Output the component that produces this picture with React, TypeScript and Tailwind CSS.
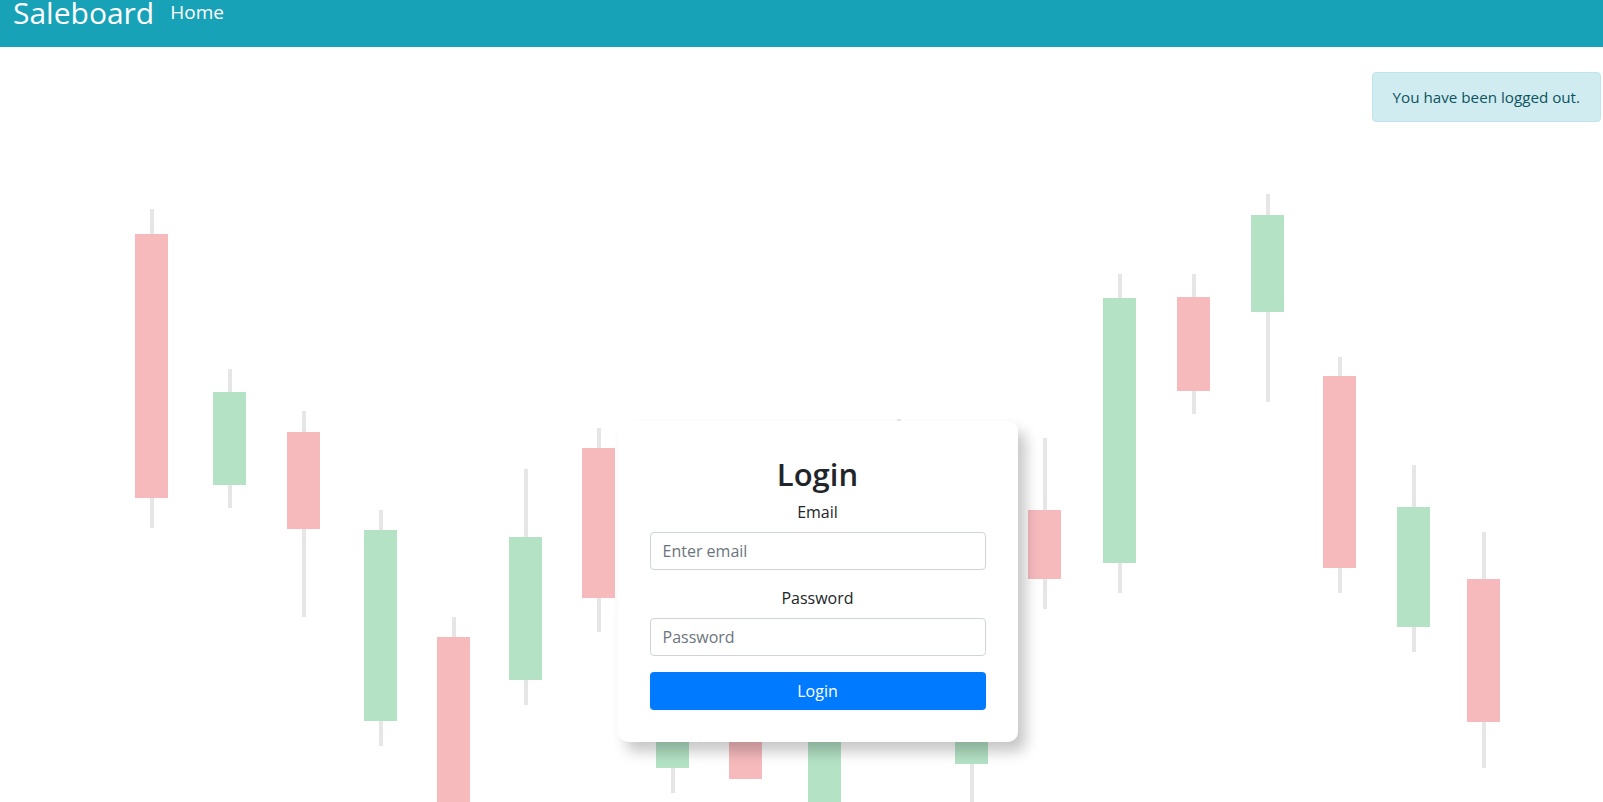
import React from "react"

type Candle = {
  x: number
  up: boolean
  top: number
  bottom: number
  high: number
  low: number
}

// background chart, page coordinates
const candles: Candle[] = [
  { x: 135, up: false, top: 234, bottom: 498, high: 209, low: 528 },
  { x: 213, up: true, top: 392, bottom: 485, high: 369, low: 508 },
  { x: 287, up: false, top: 432, bottom: 529, high: 411, low: 617 },
  { x: 364, up: true, top: 530, bottom: 721, high: 510, low: 746 },
  { x: 437, up: false, top: 637, bottom: 810, high: 617, low: 810 },
  { x: 509, up: true, top: 537, bottom: 680, high: 469, low: 705 },
  { x: 582, up: false, top: 448, bottom: 598, high: 428, low: 632 },
  { x: 656, up: true, top: 600, bottom: 768, high: 560, low: 793 },
  { x: 729, up: false, top: 640, bottom: 779, high: 600, low: 779 },
  { x: 808, up: true, top: 700, bottom: 810, high: 650, low: 810 },
  { x: 882, up: false, top: 480, bottom: 700, high: 419, low: 720 },
  { x: 955, up: true, top: 600, bottom: 764, high: 560, low: 810 },
  { x: 1028, up: false, top: 510, bottom: 579, high: 438, low: 609 },
  { x: 1103, up: true, top: 298, bottom: 563, high: 274, low: 593 },
  { x: 1177, up: false, top: 297, bottom: 391, high: 274, low: 414 },
  { x: 1251, up: true, top: 215, bottom: 312, high: 194, low: 402 },
  { x: 1323, up: false, top: 376, bottom: 568, high: 357, low: 593 },
  { x: 1397, up: true, top: 507, bottom: 627, high: 465, low: 652 },
  { x: 1467, up: false, top: 579, bottom: 722, high: 532, low: 768 },
]

function CandleChart() {
  return (
    <svg
      className="absolute top-0 left-0 w-[1603px] h-[802px]"
      viewBox="0 0 1603 802"
      xmlns="http://www.w3.org/2000/svg"
    >
      {candles.map((c, i) => (
        <g key={i}>
          <rect x={c.x + 15} y={c.high} width={4} height={c.low - c.high} fill="#e6e6e6" />
          <rect
            x={c.x}
            y={c.top}
            width={33}
            height={c.bottom - c.top}
            fill={c.up ? "#b3e2c5" : "#f6babd"}
          />
        </g>
      ))}
    </svg>
  )
}

export default function App() {
  return (
    <div className="relative h-screen overflow-hidden bg-white font-['Open_Sans',sans-serif]">
      <CandleChart />

      <nav className="relative flex items-start h-[47px] bg-[#17a2b8] pl-[13px] text-white">
        <span className="text-[30px] leading-[25px]">Saleboard</span>
        <span className="ml-4 mt-[2px] text-[19px] leading-[20px]">Home</span>
      </nav>

      <div className="absolute top-[72px] right-[2px] rounded border border-[#bee5eb] bg-[#d1ecf1] px-5 py-3 text-[15.2px] leading-6 text-[#0c5460]">
        You have been logged out.
      </div>

      <main className="relative flex justify-center pl-8 pt-[374px]">
        <div className="w-[400px] rounded-[10px] bg-white p-8 shadow-[8px_10px_14px_rgba(0,0,0,0.22)]">
          <h2 className="mb-[5px] text-center text-[31px] font-semibold leading-[42px] text-[#212529]">
            Login
          </h2>
          <form onSubmit={(e) => e.preventDefault()}>
            <label className="mb-2 block text-center text-base leading-6 text-[#212529]">Email</label>
            <input
              type="email"
              placeholder="Enter email"
              className="block h-[38px] w-full rounded border border-[#ced4da] px-3 text-base text-[#495057] placeholder:text-[#6c757d] outline-none"
            />
            <label className="mt-4 mb-2 block text-center text-base leading-6 text-[#212529]">Password</label>
            <input
              type="password"
              placeholder="Password"
              className="block h-[38px] w-full rounded border border-[#ced4da] px-3 text-base text-[#495057] placeholder:text-[#6c757d] outline-none"
            />
            <button
              type="submit"
              className="mt-4 block h-[38px] w-full rounded bg-[#007bff] text-base text-white"
            >
              Login
            </button>
          </form>
        </div>
      </main>
    </div>
  )
}
